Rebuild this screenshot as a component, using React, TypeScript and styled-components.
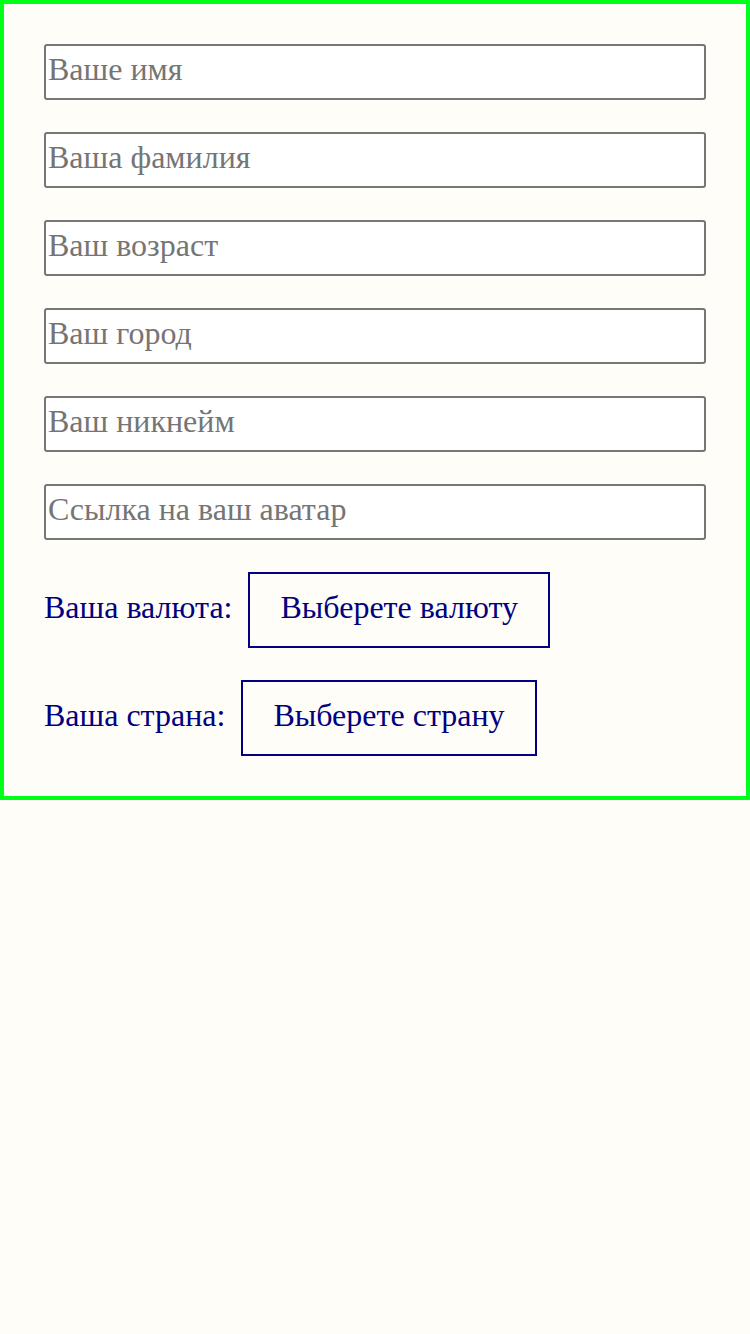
import React from "react";
import styled, { createGlobalStyle } from "styled-components";

const Global = createGlobalStyle`
  html, body { margin: 0; padding: 0; background: #fffdf8; }
  body { font-family: "Liberation Serif", "Times New Roman", serif; }
  * { box-sizing: border-box; }
`;

const Form = styled.form`
  display: flex;
  flex-direction: column;
  gap: 32px;
  padding: 40px;
  border: 4px solid #00ff19;
  background: #fffdf8;
`;

const Input = styled.input`
  display: block;
  width: 100%;
  height: 56px;
  margin: 0;
  padding: 0 2px 5px;
  border: 2px solid #767676;
  border-radius: 3px;
  background: #ffffff;
  font-family: "Liberation Serif", "Times New Roman", serif;
  font-size: 32px;
  color: #000;
  outline: none;
  &::placeholder { color: #757575; opacity: 1; }
`;

const Row = styled.div`
  display: flex;
  align-items: baseline;
  gap: 16px;
`;

const Label = styled.label`
  font-size: 32px;
  color: #000080;
`;

const Choose = styled.button`
  height: 76px;
  padding: 0 30px 6px;
  border: 2px solid #000080;
  background: transparent;
  color: #000080;
  font-family: "Liberation Serif", "Times New Roman", serif;
  font-size: 32px;
  cursor: pointer;
`;

const fields = [
  "Ваше имя",
  "Ваша фамилия",
  "Ваш возраст",
  "Ваш город",
  "Ваш никнейм",
  "Ссылка на ваш аватар",
];

export default function App() {
  return (
    <>
      <Global />
      <Form onSubmit={(e) => e.preventDefault()}>
        {fields.map((f) => (
          <Input key={f} placeholder={f} />
        ))}
        <Row>
          <Label>Ваша валюта:</Label>
          <Choose type="button">Выберете валюту</Choose>
        </Row>
        <Row>
          <Label>Ваша страна:</Label>
          <Choose type="button">Выберете страну</Choose>
        </Row>
      </Form>
    </>
  );
}
